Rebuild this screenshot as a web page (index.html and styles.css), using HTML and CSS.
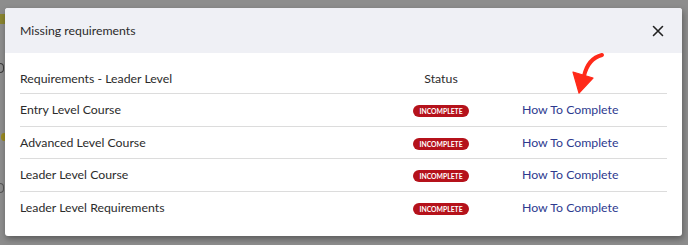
FILE: index.html
```html
<!DOCTYPE html>
<html lang="en">
<head>
    <meta charset="utf-8">
    <link rel="stylesheet" href="styles.css">
</head>
<body>
    <div class="backdrop-page">
        <span class="bg-tag"></span>
        <span class="bg-frag f1"></span>
        <span class="bg-dot"></span>
        <span class="bg-frag f2"></span>
    </div>
    <div class="modal">
        <div class="modal-header">
            <span class="modal-title">Missing requirements</span>
            <button class="close-btn" aria-label="Close">
                <svg width="12" height="12" viewBox="0 0 12 12">
                    <path d="M1.5 1.5 L10.5 10.5 M10.5 1.5 L1.5 10.5" stroke="#222" stroke-width="1.6" stroke-linecap="round"/>
                </svg>
            </button>
        </div>
        <div class="modal-body">
            <div class="req-table">
                <div class="req-row head">
                    <div class="cell">Requirements - Leader Level</div>
                    <div class="cell status">Status</div>
                    <div class="cell link-cell"></div>
                    <svg class="arrow" width="42" height="46" viewBox="0 0 42 46">
                        <path d="M37 5 C 29 7, 22 13, 19 26" fill="none" stroke="#ff2a1a" stroke-width="4" stroke-linecap="round"/>
                        <path d="M8 22 L28 28 L14 43 Z" fill="#ff2a1a" stroke="#ff2a1a" stroke-width="1.2" stroke-linejoin="round"/>
                    </svg>
                </div>
                <div class="req-row">
                    <div class="cell">Entry Level Course</div>
                    <div class="cell status"><span class="badge">INCOMPLETE</span></div>
                    <div class="cell link-cell"><a href="#">How To Complete</a></div>
                </div>
                <div class="req-row">
                    <div class="cell">Advanced Level Course</div>
                    <div class="cell status"><span class="badge">INCOMPLETE</span></div>
                    <div class="cell link-cell"><a href="#">How To Complete</a></div>
                </div>
                <div class="req-row">
                    <div class="cell">Leader Level Course</div>
                    <div class="cell status"><span class="badge">INCOMPLETE</span></div>
                    <div class="cell link-cell"><a href="#">How To Complete</a></div>
                </div>
                <div class="req-row">
                    <div class="cell">Leader Level Requirements</div>
                    <div class="cell status"><span class="badge">INCOMPLETE</span></div>
                    <div class="cell link-cell"><a href="#">How To Complete</a></div>
                </div>
            </div>
        </div>
    </div>
</body>
</html>
```

FILE: styles.css
```css
body {
    font-family: Lato, "Open Sans", sans-serif;
    margin: 0;
    padding: 8px 6px 9px 5px;
    background-color: #8d8d8d;
    position: relative;
    height: 245px;
    box-sizing: border-box;
    overflow: hidden;
}
.backdrop-page {
    position: absolute;
    left: 0;
    top: 0;
    width: 5px;
    height: 245px;
}
.bg-tag {
    position: absolute;
    left: 0;
    top: 14px;
    width: 5px;
    height: 10px;
    background-color: #8a8530;
}
.bg-frag {
    position: absolute;
    left: 0;
    width: 3px;
    height: 8px;
    border: 1.5px solid #3a3a3a;
    border-left: none;
    border-radius: 0 4px 4px 0;
}
.f1 { top: 63px; }
.f2 { top: 183px; border-color: #555; }
.bg-dot {
    position: absolute;
    left: 1px;
    top: 133px;
    width: 6px;
    height: 8px;
    border-radius: 50%;
    background-color: #9a8a20;
}
.modal {
    position: relative;
    background: white;
    border-radius: 3px;
    box-shadow: 1px 3px 6px rgba(0,0,0,0.35);
    height: 228px;
    overflow: hidden;
}
.modal-header {
    display: flex;
    justify-content: space-between;
    align-items: center;
    background-color: #eff0f5;
    height: 45px;
    padding: 0 18px 0 15px;
}
.modal-title {
    font-size: 12.3px;
    color: #2b2b2b;
}
.close-btn {
    background: none;
    border: none;
    padding: 0;
    width: 12px;
    height: 12px;
    display: flex;
    cursor: pointer;
}
.modal-body {
    padding: 0 15px;
}
.req-row {
    display: grid;
    grid-template-columns: 355px 132px 1fr;
    align-items: center;
    height: 32.5px;
    border-top: 1px solid #dcdcdc;
    box-sizing: border-box;
    font-size: 12.3px;
    color: #2b2b2b;
}
.req-row.head {
    position: relative;
    border-top: none;
    height: 40px;
    align-items: end;
    padding-bottom: 7px;
}
.cell.status {
    text-align: center;
}
.link-cell {
    padding-left: 15px;
}
.link-cell a {
    color: #2e3a8f;
    text-decoration: none;
}
.badge {
    display: inline-block;
    background-color: #b5121b;
    color: white;
    font-size: 6.8px;
    font-weight: bold;
    line-height: 12px;
    padding: 0 6px;
    border-radius: 6px;
    vertical-align: middle;
}
.arrow {
    position: absolute;
    left: 545px;
    top: -3px;
}
```
